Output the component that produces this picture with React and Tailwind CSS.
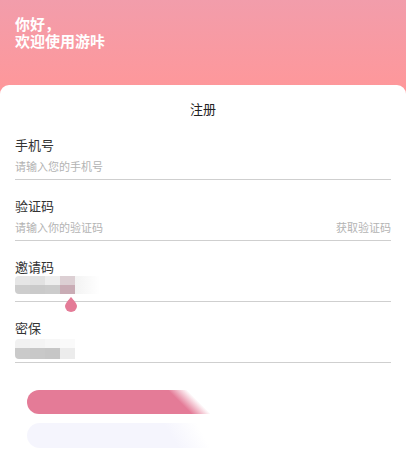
import React from 'react';

const font = { fontFamily: '"Noto Sans CJK SC", "Noto Sans", sans-serif' };

function Field({ label, children, first }) {
  return (
    <div className={first ? 'mt-[20px]' : 'mt-[18px]'}>
      <div className="text-[13px] leading-[16px] text-[#333333]">{label}</div>
      <div className="relative h-[27px] flex items-center border-b border-[#cfcfcf]">{children}</div>
    </div>
  );
}

function Mosaic({ rows, className }) {
  return (
    <div className={`flex flex-col rounded-l-[4px] overflow-hidden blur-[0.4px] ${className}`}>
      {rows.map((row, i) => (
        <div key={i} className="flex">
          {row.cells.map((c, j) => (
            <div key={j} className={row.h} style={{ width: 15, background: c }} />
          ))}
          {row.tail && <div className={`${row.h} w-[25px] bg-[linear-gradient(to_right,#f3f3f3,#ffffff)]`} />}
        </div>
      ))}
    </div>
  );
}

export default function App() {
  return (
    <div
      className="w-full min-h-[451px] bg-[linear-gradient(180deg,#f29dab_0px,#ff9799_95px,#ffffff_95px)]"
      style={font}
    >
      {/* Header */}
      <div className="h-[85px] pt-[15px] pl-[15px] text-white text-[15px] leading-[17px] font-bold">
        <div>你好，</div>
        <div>欢迎使用游咔</div>
      </div>

      {/* Card */}
      <div className="bg-white rounded-t-[9px] px-[15px] pb-[10px]">
        <div className="pt-[16px] text-center text-[13px] leading-[16px] text-[#222222]">注册</div>

        <Field label="手机号" first>
          <span className="text-[11px] text-[#b3b3b3]">请输入您的手机号</span>
        </Field>

        <Field label="验证码">
          <span className="flex-1 text-[11px] text-[#b3b3b3]">请输入你的验证码</span>
          <span className="text-[11px] text-[#b3b3b3]">获取验证码</span>
        </Field>

        <Field label="邀请码">
          <Mosaic
            className="self-start mt-[1px]"
            rows={[
              { h: 'h-[9px]', cells: ['#e6e6e6', '#e2e2e2', '#eeeeee', '#dccfd3'], tail: true },
              { h: 'h-[9px]', cells: ['#cdcdcd', '#cacaca', '#cccccc', '#c9acb5'], tail: true },
            ]}
          />
          <svg className="absolute left-[50px] top-[22px]" width="12" height="15" viewBox="0 0 12 15">
            <path d="M6 0 C6 0 0 6.5 0 9 A6 6 0 0 0 12 9 C12 6.5 6 0 6 0 Z" fill="#e47b97" />
          </svg>
        </Field>

        <Field label="密保">
          <Mosaic
            className="self-start mt-[3px]"
            rows={[
              { h: 'h-[9px]', cells: ['#f1f1f1', '#f4f4f4', '#f7f7f7', '#fafafa'] },
              { h: 'h-[11px]', cells: ['#cacaca', '#c8c8c8', '#c6c6c6', '#ececec'] },
            ]}
          />
        </Field>

        {/* Buttons */}
        <div className="mt-[27px] px-[12px] flex flex-col gap-[9px]">
          <div className="w-[190px] h-[24px] rounded-l-full bg-[linear-gradient(45deg,#e47b97_77%,rgba(228,123,151,0)_86%)]" />
          <div className="w-[190px] h-[25px] rounded-l-full bg-[linear-gradient(60deg,#f5f5fd_74%,rgba(245,245,253,0)_90%)]" />
        </div>
      </div>
    </div>
  );
}
